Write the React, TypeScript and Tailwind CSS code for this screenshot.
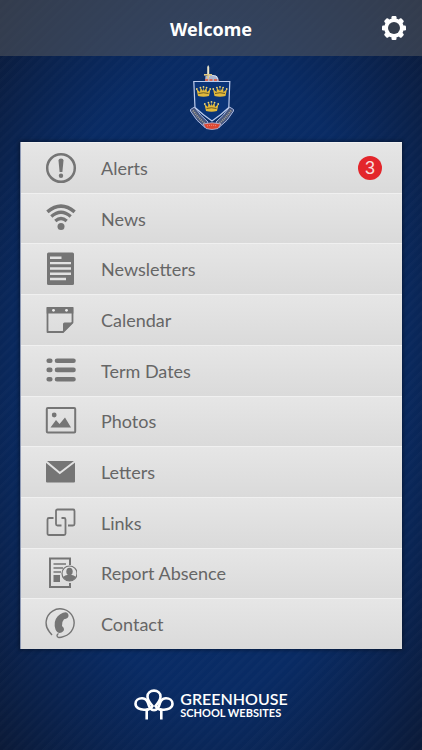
import type { ReactNode } from "react";

const grey = "#757575";

function Crown({ x, y }: { x: number; y: number }) {
  return (
    <g transform={`translate(${x} ${y})`}>
      <path d="M2 10 L0.5 3 L4 6 L4.5 1.5 L7 5 L7.5 0.5 L8 5 L10.5 1.5 L11 6 L14.5 3 L13 10 Q7.5 11.5 2 10Z" fill="#e2b93b" />
      <path d="M2.5 7.5 Q7.5 6 12.5 7.5" stroke="#4d4420" strokeWidth="0.8" fill="none" />
      <g fill="#f0d574">
        <circle cx="0.8" cy="3" r="0.9" />
        <circle cx="4.4" cy="1.6" r="0.9" />
        <circle cx="7.5" cy="0.9" r="0.9" />
        <circle cx="10.6" cy="1.6" r="0.9" />
        <circle cx="14.2" cy="3" r="0.9" />
      </g>
    </g>
  );
}

function Crest() {
  return (
    <svg width="46" height="68" viewBox="0 0 46 68" role="img" aria-label="School crest">
      <path d="M17.500 12 H29 L31 17 H17Z" fill="#a9b4cf" />
      <path d="M20 14 L22 11 L28 12 L30 15" stroke="#dfe5f2" strokeWidth="1" fill="none" />
      <path d="M17 16 H31" stroke="#d8654f" strokeWidth="2" strokeDasharray="3 1.500" />
      <path d="M20.200 1 L21.200 3 V11 H19.200 V3Z" fill="#ece5c8" />
      <path d="M16 10.800 H24" stroke="#e3ca83" strokeWidth="1.600" />
      <path d="M20.200 11 V15" stroke="#e3ca83" strokeWidth="1.500" />
      <path d="M2.500 45.500 L6.500 43 Q12 51.500 20 58 L17 63.500 Q8 57 2.500 47Z" fill="#47577f" stroke="#a7b6df" strokeWidth="1" />
      <path d="M45.500 45.500 L41.500 43 Q36 51.500 28 58 L31 63.500 Q40 57 45.500 47Z" fill="#47577f" stroke="#a7b6df" strokeWidth="1" />
      <path d="M5 46.500 Q11 55 17.500 60 M43 46.500 Q37 55 30.500 60" stroke="#a7a08e" strokeWidth="2" strokeDasharray="1 1" fill="none" />
      <path d="M15 60 Q24 57.500 33 60 L30 64.500 Q24 66.500 18 64.500Z" fill="#dc4732" stroke="#aebbe0" strokeWidth="0.800" />
      <path d="M19 62 Q24 60.500 29 62" stroke="#f2a08f" strokeWidth="1" strokeDasharray="1 1" fill="none" />
      <path d="M5.800 17.500 H41.800 L40.800 43.500 Q33 51 24 57 Q15 51 7 43.500Z" fill="#0a3478" stroke="#bccbed" strokeWidth="1.200" />
      <Crown x={8} y={22} />
      <Crown x={24.500} y={22} />
      <Crown x={16} y={37} />
    </svg>
  );
}

function Gear() {
  return (
    <svg width="24" height="24" viewBox="0 0 24 24" aria-hidden="true">
      <g fill="#fff">
        <rect x="9.500" y="0" width="5" height="24" rx="1.200" />
        <rect x="9.500" y="0" width="5" height="24" rx="1.200" transform="rotate(45 12 12)" />
        <rect x="9.500" y="0" width="5" height="24" rx="1.200" transform="rotate(90 12 12)" />
        <rect x="9.500" y="0" width="5" height="24" rx="1.200" transform="rotate(135 12 12)" />
        <circle cx="12" cy="12" r="9.800" />
      </g>
      <circle cx="12" cy="12" r="6" fill="#353e4c" />
    </svg>
  );
}

function Trees() {
  return (
    <svg width="40" height="31" viewBox="0 0 40 31" fill="none" stroke="#fff" strokeWidth="2.600" aria-hidden="true">
      <path d="M12.700 30.500 V20.500 C5.500 21.500 1.500 18.500 1.500 14.800 C1.500 11.300 4.500 9.300 8 9.300 C13 9.300 14 13.500 15 17 C15.500 19 16.500 20.800 20 21.300" />
      <path d="M27.300 30.500 V20.500 C34.500 21.500 38.500 18.500 38.500 14.800 C38.500 11.300 35.500 9.300 32 9.300 C27 9.300 26 13.500 25 17 C24.500 19 23.500 20.800 20 21.300" />
      <path d="M12.700 21 C16 20.500 17.500 18.500 18.500 17 C16 14 13.500 11.500 13.500 7.500 C13.500 3.800 16.500 1.600 20 1.600 C23.500 1.600 26.500 3.800 26.500 7.500 C26.500 11.500 24 14 21.500 17 C22.500 18.500 24 20.500 27.300 21" />
    </svg>
  );
}

function Icon({ children }: { children: ReactNode }) {
  return (
    <svg width="32" height="34" viewBox="0 0 32 34" fill="none" stroke={grey} className="shrink-0" aria-hidden="true">
      {children}
    </svg>
  );
}

type Item = { label: string; icon: ReactNode; badge?: number };

const items: Item[] = [
  {
    label: "Alerts",
    badge: 3,
    icon: (
      <Icon>
        <circle cx="16" cy="17" r="13.800" strokeWidth="2.500" />
        <path d="M13.500 9.500 Q13.500 7.500 16 7.500 Q18.500 7.500 18.500 9.500 L17.400 21 H14.600Z" fill={grey} stroke="none" />
        <circle cx="16" cy="24.800" r="2.200" fill={grey} stroke="none" />
      </Icon>
    ),
  },
  {
    label: "News",
    icon: (
      <Icon>
        <path d="M2.400 9.800 Q16 -1.500 29.600 9.800" strokeWidth="3.600" />
        <path d="M6.300 14.500 Q16 6 25.700 14.500" strokeWidth="3.300" />
        <path d="M10.300 19 Q16 14 21.700 19" strokeWidth="3.300" />
        <circle cx="16" cy="24.500" r="3.500" fill={grey} stroke="none" />
      </Icon>
    ),
  },
  {
    label: "Newsletters",
    icon: (
      <Icon>
        <rect x="2" y="0.500" width="27" height="32.500" rx="1.500" fill={grey} stroke="none" />
        <path d="M5 5.700 H16.500 M5 11.100 H26 M5 16.500 H26 M5 21.700 H26 M5 27 H21" stroke="#e2e2e2" strokeWidth="2.400" />
      </Icon>
    ),
  },
  {
    label: "Calendar",
    icon: (
      <Icon>
        <path d="M2.500 5 H27.500 V19.500 L18 29 H2.500Z" strokeWidth="1.800" strokeLinejoin="round" />
        <path d="M1.700 4 H28.300 V10.500 H1.700Z" fill={grey} stroke="none" />
        <path d="M18 29.500 V21 Q18 19.500 19.500 19.500 H28Z" fill={grey} stroke="none" />
        <circle cx="8.500" cy="7.300" r="1.400" fill="#eee" stroke="none" />
        <circle cx="21.500" cy="7.300" r="1.400" fill="#eee" stroke="none" />
      </Icon>
    ),
  },
  {
    label: "Term Dates",
    icon: (
      <Icon>
        <path d="M3.700 6.700 H5.300 M12 6.700 H28.500 M3.700 15.900 H5.300 M12 15.900 H28.500 M3.700 25.200 H5.300 M12 25.200 H28.500" strokeWidth="4.600" strokeLinecap="round" />
      </Icon>
    ),
  },
  {
    label: "Photos",
    icon: (
      <Icon>
        <rect x="1.800" y="4" width="28.400" height="24.500" rx="1" strokeWidth="2" />
        <circle cx="9.200" cy="11" r="2.400" fill={grey} stroke="none" />
        <path d="M5.500 23.500 L11 16 L14.500 20 L20 13.500 L26 23.500Z" fill={grey} stroke="none" />
      </Icon>
    ),
  },
  {
    label: "Letters",
    icon: (
      <Icon>
        <rect x="1" y="6" width="29" height="21.500" rx="1" fill={grey} stroke="none" />
        <path d="M0.500 6 L14.800 18 L30.500 6" stroke="#e2e2e2" strokeWidth="2" />
      </Icon>
    ),
  },
  {
    label: "Links",
    icon: (
      <Icon>
        <path d="M16.500 12 H19 Q20.500 12 20.500 13.500 V27.500 Q20.500 29 19 29 H4 Q2.500 29 2.500 27.500 V13.500 Q2.500 12 4 12 H8.500" strokeWidth="1.800" />
        <path d="M16.500 19.500 H12.500 Q11 19.500 11 18 V5 Q11 3.500 12.500 3.500 H28 Q29.500 3.500 29.500 5 V18 Q29.500 19.500 28 19.500 H23" strokeWidth="1.800" />
      </Icon>
    ),
  },
  {
    label: "Report Absence",
    icon: (
      <Icon>
        <path d="M25 9 V2.500 H5 V31 H25 V27" strokeWidth="2" />
        <path d="M8.500 8 H21 M8.500 12 H18 M8.500 16 H16" strokeWidth="1.500" />
        <rect x="8.500" y="19" width="6.500" height="7" fill={grey} stroke="none" />
        <circle cx="24.500" cy="17.500" r="7.500" fill="#e2e2e2" strokeWidth="1.200" />
        <ellipse cx="24.500" cy="15.500" rx="3.200" ry="3.800" fill={grey} stroke="none" />
        <path d="M18 21 Q20 19.300 23 18.800 V17.500 H26 V18.800 Q29 19.300 31 21 Q28.500 25 24.500 25 Q20.500 25 18 21Z" fill={grey} stroke="none" />
      </Icon>
    ),
  },
  {
    label: "Contact",
    icon: (
      <Icon>
        <path d="M7 28 L4.500 25 A14 14 0 1 1 19 29.300 Q12 32 12 28.500 Q12 27.500 13.500 26.500" strokeWidth="1.400" />
        <path d="M18 5.800 Q22 4 23.300 7.200 Q24.300 10.500 21 11.800 L19 12.300 Q16.500 15 17 19 L18.600 20.700 Q20 23.800 16.500 25.500 Q12.500 27 10.500 22.500 Q8 14.500 12.500 9.500 Q15 6.800 18 5.800Z" fill={grey} stroke="none" />
      </Icon>
    ),
  },
];

export default function App() {
  return (
    <div className="flex min-h-screen flex-col bg-[repeating-linear-gradient(135deg,rgba(255,255,255,0.014)_0px,rgba(255,255,255,0.014)_2px,transparent_4px,transparent_7px),radial-gradient(ellipse_at_center,#0a3170_0%,#092b64_60%,#0b1a38_100%)] font-[Lato,sans-serif]">
      <header className="grid h-14 grid-cols-[1fr_auto_1fr] items-center bg-[rgba(78,83,91,0.6)] px-4">
        <h1 className="col-start-2 pt-0.5 font-['Noto_Sans','Open_Sans',sans-serif] text-lg font-bold text-white">Welcome</h1>
        <button type="button" aria-label="Settings" className="justify-self-end">
          <Gear />
        </button>
      </header>
      <div className="flex h-[86px] justify-center pt-2">
        <Crest />
      </div>
      <nav aria-label="Main menu" className="mx-5 flex flex-1 flex-col border-l border-[#8f9ab5] shadow-[0_0_4px_1px_rgba(0,0,0,0.4)]">
        <ul className="flex flex-1 flex-col">
          {items.map((item) => (
            <li key={item.label} className="flex min-h-12 flex-1">
              <a
                href={`#${item.label.toLowerCase().replace(" ", "-")}`}
                className="flex flex-1 items-center gap-6 border-t border-[#f0f0f0] bg-linear-to-b from-[#e6e6e6] to-[#dadada] pr-5 pl-6 text-lg text-[#666666]"
              >
                {item.icon}
                <span className="flex-1">{item.label}</span>
                {item.badge && (
                  <span className="flex size-6 items-center justify-center rounded-full bg-[#e3262b] font-['Liberation_Sans',sans-serif] text-lg text-[#f9dcdc]">
                    {item.badge}
                  </span>
                )}
              </a>
            </li>
          ))}
        </ul>
      </nav>
      <footer className="flex h-[101px] items-center justify-center gap-1.5 pt-2.5 text-white">
        <Trees />
        <p className="flex flex-col">
          <span className="text-base leading-4 font-semibold">GREENHOUSE</span>
          <span className="text-[11px] leading-3 font-bold">SCHOOL WEBSITES</span>
        </p>
      </footer>
    </div>
  );
}
